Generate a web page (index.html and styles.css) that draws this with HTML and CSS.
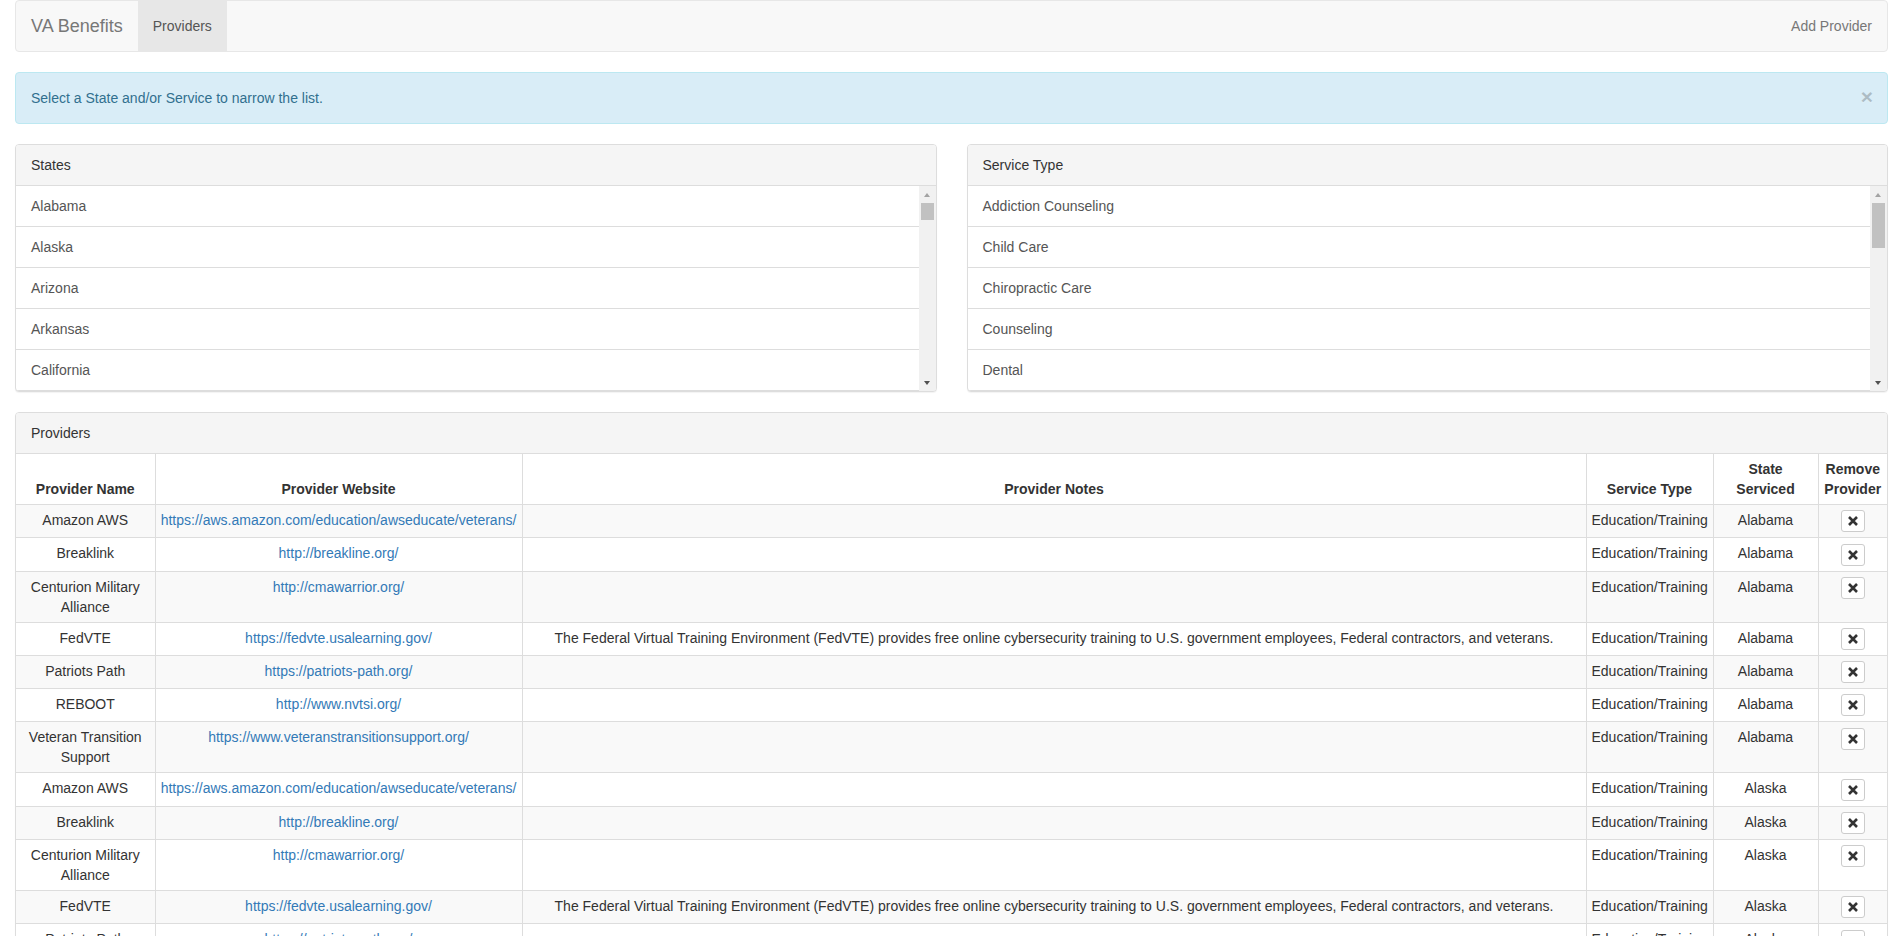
FILE: index.html
```html
<!DOCTYPE html>
<html lang="en">
<head>
<meta charset="utf-8">
<title>VA Benefits - Providers</title>
<link rel="stylesheet" href="styles.css">
</head>
<body>
<div class="page">
  <nav class="navbar">
    <div class="nav-left">
      <a class="brand" href="#">VA Benefits</a>
      <a class="nav-link active" href="#">Providers</a>
    </div>
    <a class="nav-link" href="#">Add Provider</a>
  </nav>

  <div class="alert">
    <span>Select a State and/or Service to narrow the list.</span>
    <span class="close">&times;</span>
  </div>

  <div class="filters">
    <div class="panel">
      <div class="panel-heading">States</div>
      <div class="list-wrap">
        <ul class="list">
          <li>Alabama</li><li>Alaska</li><li>Arizona</li><li>Arkansas</li><li>California</li>
          <li>Colorado</li><li>Connecticut</li><li>Delaware</li><li>Florida</li><li>Georgia</li>
          <li>Hawaii</li><li>Idaho</li><li>Illinois</li><li>Indiana</li><li>Iowa</li>
          <li>Kansas</li><li>Kentucky</li><li>Louisiana</li><li>Maine</li><li>Maryland</li>
          <li>Massachusetts</li><li>Michigan</li><li>Minnesota</li><li>Mississippi</li><li>Missouri</li>
          <li>Montana</li><li>Nebraska</li><li>Nevada</li><li>New Hampshire</li><li>New Jersey</li>
          <li>New Mexico</li><li>New York</li><li>North Carolina</li><li>North Dakota</li><li>Ohio</li>
          <li>Oklahoma</li><li>Oregon</li><li>Pennsylvania</li><li>Rhode Island</li><li>South Carolina</li>
          <li>South Dakota</li><li>Tennessee</li><li>Texas</li><li>Utah</li><li>Vermont</li>
          <li>Virginia</li><li>Washington</li><li>West Virginia</li><li>Wisconsin</li><li>Wyoming</li>
        </ul>
        <div class="scrollbar">
          <span class="sb-up"></span>
          <span class="sb-thumb" style="height: 17px"></span>
          <span class="sb-down"></span>
        </div>
      </div>
    </div>
    <div class="panel">
      <div class="panel-heading">Service Type</div>
      <div class="list-wrap">
        <ul class="list">
          <li>Addiction Counseling</li><li>Child Care</li><li>Chiropractic Care</li><li>Counseling</li><li>Dental</li>
          <li>Education/Training</li><li>Employment</li><li>Financial Assistance</li><li>Food Assistance</li><li>Housing</li>
          <li>Legal Assistance</li><li>Medical</li><li>Mental Health</li><li>Mentoring</li><li>Physical Therapy</li>
          <li>Recreation</li><li>Transportation</li><li>Vision</li><li>Wellness</li>
        </ul>
        <div class="scrollbar">
          <span class="sb-up"></span>
          <span class="sb-thumb" style="height: 45px"></span>
          <span class="sb-down"></span>
        </div>
      </div>
    </div>
  </div>

  <div class="panel">
    <div class="panel-heading">Providers</div>
    <table class="table">
      <thead>
        <tr>
          <th class="col-name">Provider Name</th>
          <th class="col-site">Provider Website</th>
          <th class="col-notes">Provider Notes</th>
          <th class="col-service">Service Type</th>
          <th class="col-state">State Serviced</th>
          <th class="col-remove">Remove Provider</th>
        </tr>
      </thead>
      <tbody>
        <tr><td>Amazon AWS</td><td><a href="#">https://aws.amazon.com/education/awseducate/veterans/</a></td><td></td><td>Education/Training</td><td>Alabama</td><td><span class="btn-remove"><svg class="icon-x" viewBox="0 0 12 12" width="12" height="12"><path d="M2 2L10 10M10 2L2 10"/></svg></span></td></tr>
        <tr><td>Breaklink</td><td><a href="#">http://breakline.org/</a></td><td></td><td>Education/Training</td><td>Alabama</td><td><span class="btn-remove"><svg class="icon-x" viewBox="0 0 12 12" width="12" height="12"><path d="M2 2L10 10M10 2L2 10"/></svg></span></td></tr>
        <tr><td>Centurion Military Alliance</td><td><a href="#">http://cmawarrior.org/</a></td><td></td><td>Education/Training</td><td>Alabama</td><td><span class="btn-remove"><svg class="icon-x" viewBox="0 0 12 12" width="12" height="12"><path d="M2 2L10 10M10 2L2 10"/></svg></span></td></tr>
        <tr><td>FedVTE</td><td><a href="#">https://fedvte.usalearning.gov/</a></td><td>The Federal Virtual Training Environment (FedVTE) provides free online cybersecurity training to U.S. government employees, Federal contractors, and veterans.</td><td>Education/Training</td><td>Alabama</td><td><span class="btn-remove"><svg class="icon-x" viewBox="0 0 12 12" width="12" height="12"><path d="M2 2L10 10M10 2L2 10"/></svg></span></td></tr>
        <tr><td>Patriots Path</td><td><a href="#">https://patriots-path.org/</a></td><td></td><td>Education/Training</td><td>Alabama</td><td><span class="btn-remove"><svg class="icon-x" viewBox="0 0 12 12" width="12" height="12"><path d="M2 2L10 10M10 2L2 10"/></svg></span></td></tr>
        <tr><td>REBOOT</td><td><a href="#">http://www.nvtsi.org/</a></td><td></td><td>Education/Training</td><td>Alabama</td><td><span class="btn-remove"><svg class="icon-x" viewBox="0 0 12 12" width="12" height="12"><path d="M2 2L10 10M10 2L2 10"/></svg></span></td></tr>
        <tr><td>Veteran Transition Support</td><td><a href="#">https://www.veteranstransitionsupport.org/</a></td><td></td><td>Education/Training</td><td>Alabama</td><td><span class="btn-remove"><svg class="icon-x" viewBox="0 0 12 12" width="12" height="12"><path d="M2 2L10 10M10 2L2 10"/></svg></span></td></tr>
        <tr><td>Amazon AWS</td><td><a href="#">https://aws.amazon.com/education/awseducate/veterans/</a></td><td></td><td>Education/Training</td><td>Alaska</td><td><span class="btn-remove"><svg class="icon-x" viewBox="0 0 12 12" width="12" height="12"><path d="M2 2L10 10M10 2L2 10"/></svg></span></td></tr>
        <tr><td>Breaklink</td><td><a href="#">http://breakline.org/</a></td><td></td><td>Education/Training</td><td>Alaska</td><td><span class="btn-remove"><svg class="icon-x" viewBox="0 0 12 12" width="12" height="12"><path d="M2 2L10 10M10 2L2 10"/></svg></span></td></tr>
        <tr><td>Centurion Military Alliance</td><td><a href="#">http://cmawarrior.org/</a></td><td></td><td>Education/Training</td><td>Alaska</td><td><span class="btn-remove"><svg class="icon-x" viewBox="0 0 12 12" width="12" height="12"><path d="M2 2L10 10M10 2L2 10"/></svg></span></td></tr>
        <tr><td>FedVTE</td><td><a href="#">https://fedvte.usalearning.gov/</a></td><td>The Federal Virtual Training Environment (FedVTE) provides free online cybersecurity training to U.S. government employees, Federal contractors, and veterans.</td><td>Education/Training</td><td>Alaska</td><td><span class="btn-remove"><svg class="icon-x" viewBox="0 0 12 12" width="12" height="12"><path d="M2 2L10 10M10 2L2 10"/></svg></span></td></tr>
        <tr><td>Patriots Path</td><td><a href="#">https://patriots-path.org/</a></td><td></td><td>Education/Training</td><td>Alaska</td><td><span class="btn-remove"><svg class="icon-x" viewBox="0 0 12 12" width="12" height="12"><path d="M2 2L10 10M10 2L2 10"/></svg></span></td></tr>
        <tr><td>REBOOT</td><td><a href="#">http://www.nvtsi.org/</a></td><td></td><td>Education/Training</td><td>Alaska</td><td><span class="btn-remove"><svg class="icon-x" viewBox="0 0 12 12" width="12" height="12"><path d="M2 2L10 10M10 2L2 10"/></svg></span></td></tr>
        <tr><td>Veteran Transition Support</td><td><a href="#">https://www.veteranstransitionsupport.org/</a></td><td></td><td>Education/Training</td><td>Alaska</td><td><span class="btn-remove"><svg class="icon-x" viewBox="0 0 12 12" width="12" height="12"><path d="M2 2L10 10M10 2L2 10"/></svg></span></td></tr>
      </tbody>
    </table>
  </div>
</div>
</body>
</html>
```

FILE: styles.css
```css
* {
  box-sizing: border-box;
}

html, body {
  margin: 0;
  padding: 0;
}

body {
  font-family: "Liberation Sans", Arial, Helvetica, sans-serif;
  font-size: 14px;
  line-height: 20px;
  color: #333;
  background: #fff;
}

.page {
  padding: 0 11px 0 15px;
}

/* Navbar */
.navbar {
  display: flex;
  justify-content: space-between;
  height: 52px;
  margin-bottom: 20px;
  background: #f8f8f8;
  border: 1px solid #e7e7e7;
  border-radius: 4px;
}

.nav-left {
  display: flex;
}

.brand {
  padding: 15px;
  font-size: 18px;
  line-height: 20px;
  color: #777;
  text-decoration: none;
}

.nav-link {
  padding: 15px;
  line-height: 20px;
  color: #777;
  text-decoration: none;
}

.nav-link.active {
  background: #e7e7e7;
  color: #555;
}

/* Alert */
.alert {
  display: flex;
  justify-content: space-between;
  align-items: flex-start;
  padding: 15px 35px 15px 15px;
  margin-bottom: 20px;
  background: #d9edf7;
  border: 1px solid #bce8f1;
  border-radius: 4px;
  color: #31708f;
}

.close {
  position: relative;
  top: -2px;
  height: 20px;
  margin-right: -21px;
  font-size: 21px;
  font-weight: bold;
  line-height: 1;
  color: #000;
  opacity: 0.2;
  text-shadow: 0 1px 0 #fff;
}

/* Panels */
.filters {
  display: grid;
  grid-template-columns: 1fr 1fr;
  column-gap: 30px;
}

.panel {
  margin-bottom: 20px;
  background: #fff;
  border: 1px solid #ddd;
  border-radius: 4px;
  box-shadow: 0 1px 1px rgba(0, 0, 0, 0.05);
  overflow: hidden;
}

.panel-heading {
  padding: 10px 15px;
  background: #f5f5f5;
  border-bottom: 1px solid #ddd;
  color: #333;
}

.list-wrap {
  position: relative;
}

.list {
  list-style: none;
  margin: 0;
  padding: 0;
  height: 205px;
  overflow: hidden;
}

.list li {
  padding: 10px 15px;
  border-bottom: 1px solid #ddd;
  color: #555;
}

/* Classic scrollbar drawn over the list's right edge */
.scrollbar {
  position: absolute;
  top: 0;
  right: 0;
  bottom: 0;
  width: 17px;
  background: #f1f1f1;
}

.sb-up,
.sb-down {
  position: absolute;
  left: 5px;
  width: 0;
  height: 0;
  border-left: 3.5px solid transparent;
  border-right: 3.5px solid transparent;
}

.sb-up {
  top: 7px;
  border-bottom: 4px solid #a3a3a3;
}

.sb-down {
  bottom: 6px;
  border-top: 4px solid #505050;
}

.sb-thumb {
  position: absolute;
  top: 17px;
  left: 2px;
  right: 2px;
  background: #c1c1c1;
}

/* Table */
.table {
  width: 100%;
  border-collapse: collapse;
  border-spacing: 0;
  table-layout: fixed;
}

.table th,
.table td {
  padding: 5px;
  border: 1px solid #ddd;
  text-align: center;
  vertical-align: top;
  line-height: 20px;
}

.table th {
  vertical-align: bottom;
  font-weight: bold;
  color: #333;
}

.col-name { width: 139px; }
.col-site { width: 367px; }
.col-service { width: 127px; }
.col-state { width: 105px; }
.col-remove { width: 69px; }

.table thead th {
  border-top: 0;
}

.table tr > :first-child {
  border-left: 0;
}

.table tr > :last-child {
  border-right: 0;
}

.table tbody tr:nth-child(odd) {
  background: #f9f9f9;
}

.table a {
  color: #337ab7;
  text-decoration: none;
}

.btn-remove {
  display: inline-flex;
  align-items: center;
  justify-content: center;
  width: 24px;
  height: 22px;
  vertical-align: middle;
  background: #fff;
  border: 1px solid #ccc;
  border-radius: 3px;
}

.icon-x {
  display: block;
  fill: none;
  stroke: #333;
  stroke-width: 2.6;
}
```
